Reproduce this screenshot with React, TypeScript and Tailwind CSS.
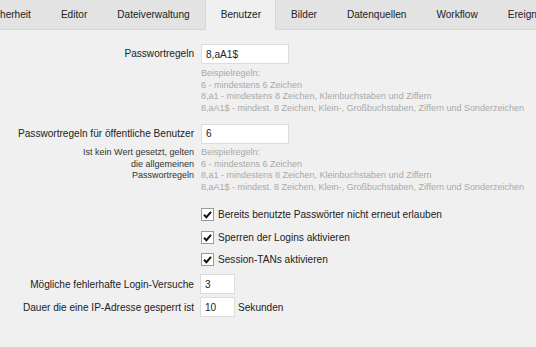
import React from "react";

const tabs = [
  { label: "Sicherheit", active: false },
  { label: "Editor", active: false },
  { label: "Dateiverwaltung", active: false },
  { label: "Benutzer", active: true },
  { label: "Bilder", active: false },
  { label: "Datenquellen", active: false },
  { label: "Workflow", active: false },
  { label: "Ereignisse", active: false },
];

const hints = [
  "Beispielregeln:",
  "6 - mindestens 6 Zeichen",
  "8,a1 - mindestens 8 Zeichen, Kleinbuchstaben und Ziffern",
  "8,aA1$ - mindest. 8 Zeichen, Klein-, Großbuchstaben, Ziffern und Sonderzeichen",
];

function Hints() {
  return (
    <div className="whitespace-nowrap text-[9px] text-[#a9a9a9] leading-[11.7px]">
      {hints.map((h) => (
        <div key={h}>{h}</div>
      ))}
    </div>
  );
}

function Check({ label }: { label: string }) {
  return (
    <div className="flex h-[22.5px] items-center pl-[201px]">
      <span className="flex h-[13px] w-[13px] items-center justify-center border border-[#9a9a9a] bg-white">
        <svg width="11" height="11" viewBox="0 0 11 11">
          <path d="M2 5.8 L4.4 8.2 L9 2.8" fill="none" stroke="#111" strokeWidth="2" />
        </svg>
      </span>
      <span className="ml-[4px]">{label}</span>
    </div>
  );
}

export default function App() {
  return (
    <div className="h-[347px] w-[536px] overflow-hidden bg-[#f0f0f0] font-['Liberation_Sans',Arial,sans-serif] text-[10.1px] text-[#222]">
      {/* Tabs */}
      <div className="flex h-[30px] border-b border-[#d6d6d6] bg-[#e3e3e3] whitespace-nowrap">
        <div className="flex -ml-[29px]">
          {tabs.map((t) =>
            t.active ? (
              <div
                key={t.label}
                className="-mb-px flex items-center border-x border-[#d6d6d6] bg-[#f0f0f0] pl-[15px] pr-[14px]"
              >
                {t.label}
              </div>
            ) : (
              <div key={t.label} className="flex items-center px-[15px] text-[#222]">
                {t.label}
              </div>
            )
          )}
        </div>
      </div>

      <div className="pt-[14px]">
        {/* Passwortregeln */}
        <div className="flex items-center">
          <div className="w-[194px] text-right">Passwortregeln</div>
          <input
            readOnly
            value="8,aA1$"
            className="ml-[7px] h-[20px] w-[88px] border border-[#dcdcdc] bg-white px-[4px] text-[10.1px] outline-none"
          />
        </div>
        <div className="mt-[4px] pl-[201px]">
          <Hints />
        </div>

        {/* Public users */}
        <div className="mt-[9px] flex items-center">
          <div className="w-[194px] text-right">Passwortregeln für öffentliche Benutzer</div>
          <input
            readOnly
            value="6"
            className="ml-[7px] h-[20px] w-[88px] border border-[#dcdcdc] bg-white px-[4px] text-[10.1px] outline-none"
          />
        </div>
        <div className="mt-[3px] flex">
          <div className="w-[194px] shrink-0 whitespace-nowrap text-right text-[9px] leading-[11.7px] text-[#333]">
            Ist kein Wert gesetzt, gelten
            <br />
            die allgemeinen
            <br />
            Passwortregeln
          </div>
          <div className="ml-[7px]">
            <Hints />
          </div>
        </div>

        {/* Checkboxes */}
        <div className="mt-[10px]">
          <Check label="Bereits benutzte Passwörter nicht erneut erlauben" />
          <Check label="Sperren der Logins aktivieren" />
          <Check label="Session-TANs aktivieren" />
        </div>

        {/* Login attempts */}
        <div className="mt-[3px] flex items-center">
          <div className="w-[194px] text-right">Mögliche fehlerhafte Login-Versuche</div>
          <input
            readOnly
            value="3"
            className="ml-[6px] h-[20px] w-[35px] border border-[#dcdcdc] bg-white px-[4px] text-[10.1px] outline-none"
          />
        </div>
        <div className="mt-[3px] flex items-center">
          <div className="w-[194px] text-right">Dauer die eine IP-Adresse gesperrt ist</div>
          <input
            readOnly
            value="10"
            className="ml-[6px] h-[20px] w-[35px] border border-[#dcdcdc] bg-white px-[4px] text-[10.1px] outline-none"
          />
          <span className="ml-[3px]">Sekunden</span>
        </div>
      </div>
    </div>
  );
}
